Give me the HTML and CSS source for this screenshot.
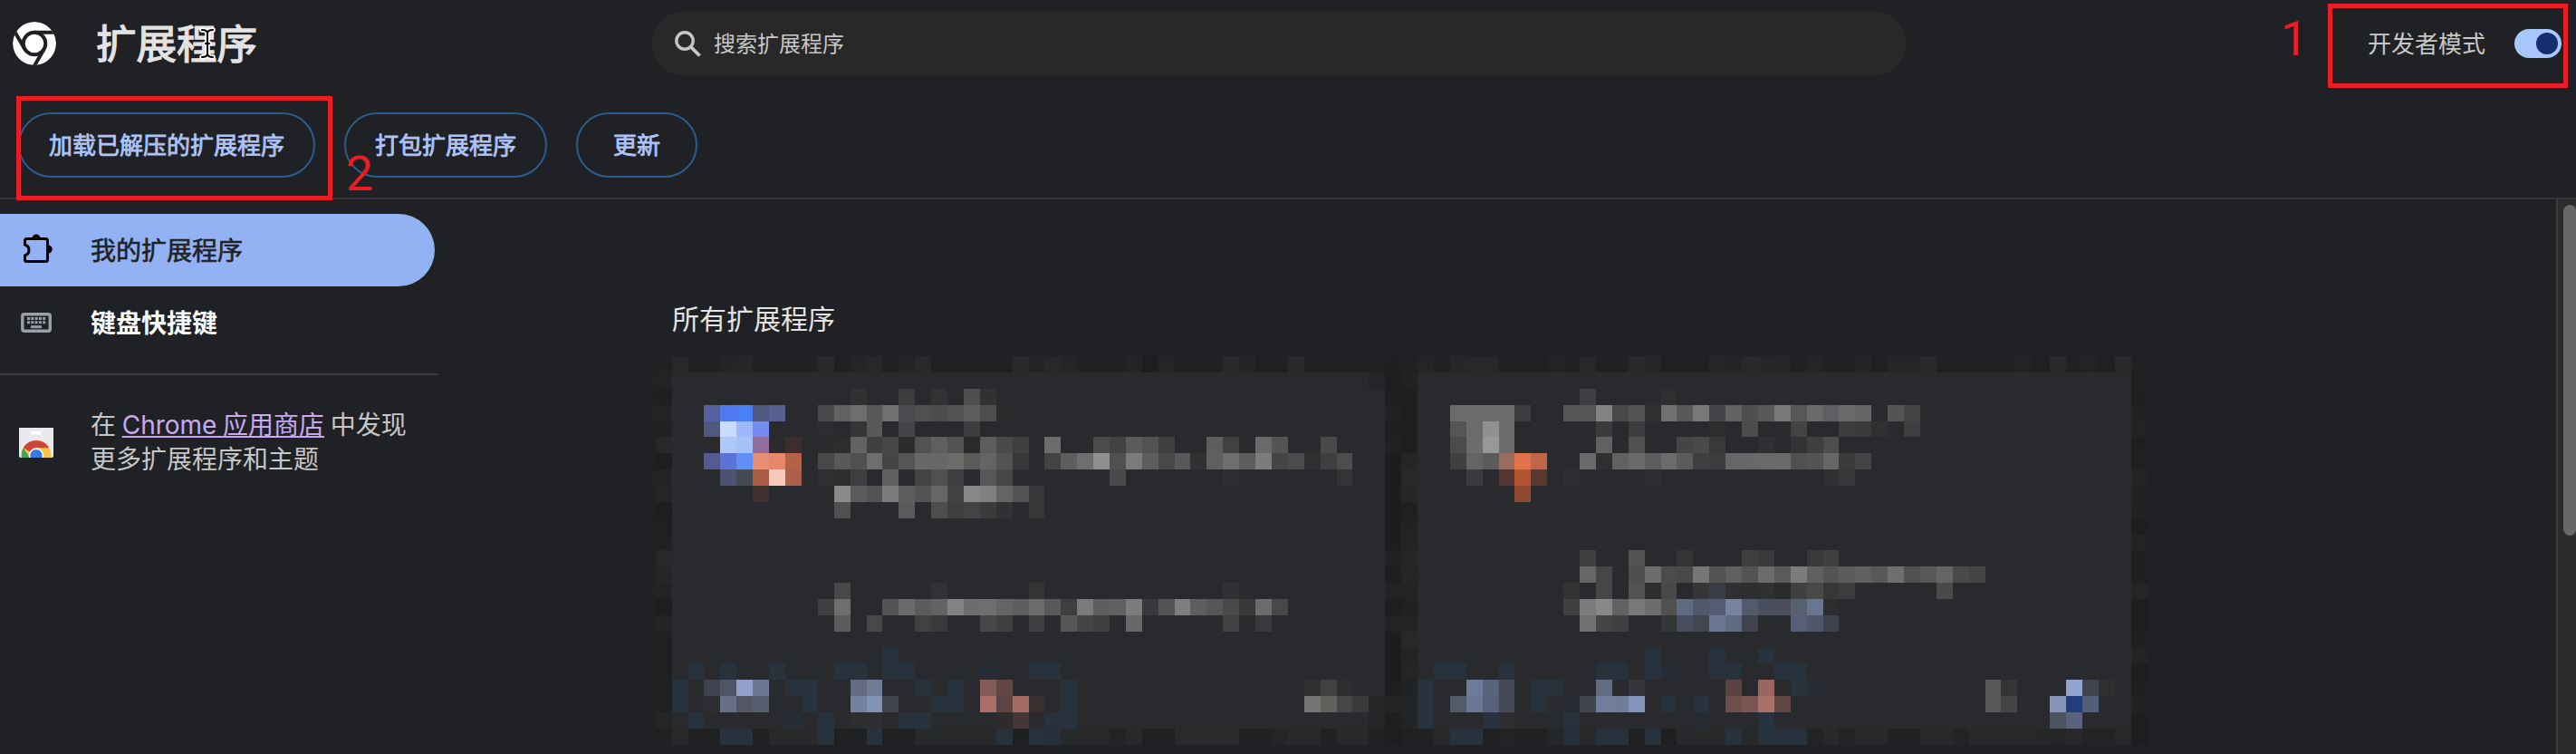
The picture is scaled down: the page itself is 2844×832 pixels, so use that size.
FILE: index.html
```html
<!DOCTYPE html>
<html lang="zh-CN">
<head>
<meta charset="utf-8">
<title>扩展程序</title>
<link rel="stylesheet" href="styles.css">
</head>
<body>
<div class="page">
  <header class="toolbar">
    <div class="brand">
      <svg class="brand-logo" viewBox="0 0 48 48">
        <defs><clipPath id="disc"><circle cx="24" cy="24" r="24"/></clipPath></defs>
        <g clip-path="url(#disc)">
          <circle cx="24" cy="24" r="24" fill="#fff"/>
          <circle cx="24" cy="24" r="12.300" fill="none" stroke="#202124" stroke-width="4"/>
          <path d="M24 11.700H50M13.400 30.200L0.400 7.700M34.600 30.200L21.600 52.700" fill="none" stroke="#202124" stroke-width="4"/>
        </g>
      </svg>
      <h1 class="brand-title">扩展程序</h1>
    </div>
    <div class="search">
      <svg class="search-icon" viewBox="0 0 29 29"><circle cx="11" cy="11" r="9.2" fill="none" stroke="#c7c7c7" stroke-width="3.4"/><path d="M17.5 17.5L27.5 27.5" stroke="#c7c7c7" stroke-width="3.8"/></svg>
      <span class="label">搜索扩展程序</span>
    </div>
    <div class="dev-mode">
      <span class="label">开发者模式</span>
      <span class="toggle"><span class="toggle-knob"></span></span>
    </div>
  </header>
  <div class="actions">
    <button class="action"><span class="label">加载已解压的扩展程序</span></button>
    <button class="action"><span class="label">打包扩展程序</span></button>
    <button class="action action-short"><span class="label">更新</span></button>
  </div>
  <div class="body">
    <nav class="sidebar">
      <a class="nav-item nav-active">
        <svg class="nav-icon" viewBox="0 0 40 40"><path d="M9.500 7.500H30.500Q32.500 7.500 32.500 9.500V30.500Q32.500 32.500 30.500 32.500H9.500Q7.500 32.500 7.500 30.500V26Q12 24.500 12 20T7.500 14V9.500Q7.500 7.500 9.500 7.500Z" fill="none" stroke="#000" stroke-width="3"/><path d="M15.500 7a4.500 4.500 0 0 1 9 0zM33 14.500a4.800 4.500 0 0 1 0 9z" fill="#000"/></svg>
        <span class="label">我的扩展程序</span>
      </a>
      <a class="nav-item nav-bold">
        <svg class="nav-icon" viewBox="0 0 40 40"><rect x="4.800" y="10.800" width="30.500" height="18.500" rx="2" fill="none" stroke="#9aa0a6" stroke-width="3.400"/><path d="M10 15.500H30.500M10 19.800H30.500" stroke="#9aa0a6" stroke-width="3" stroke-dasharray="3 1.300"/><path d="M14 24.700H26" stroke="#9aa0a6" stroke-width="3"/></svg>
        <span class="label">键盘快捷键</span>
      </a>
      <div class="divider"></div>
      <div class="store">
        <svg class="store-icon" viewBox="0 0 38 33">
          <defs><clipPath id="bag"><path d="M0 0H38V31Q38 33 36 33H2Q0 33 0 31Z"/></clipPath></defs>
          <g clip-path="url(#bag)">
            <rect width="38" height="33" fill="#e8eaed"/>
            <rect x="13" y="4" width="12" height="3.500" rx="1.700" fill="#fff"/>
            <circle cx="19" cy="30.500" r="16.500" fill="#f9c440"/>
            <path d="M19 30.500L4.700 22.200A16.500 16.500 0 0 1 33.300 22.200H19z" fill="#d0453a"/>
            <path d="M4.700 22.200A16.500 16.500 0 0 0 3 33H14L11.500 32z" fill="#4c9f58"/>
            <circle cx="19" cy="30.500" r="8.300" fill="#fff"/>
            <circle cx="19" cy="30.500" r="6.600" fill="#3b78e0"/>
          </g>
        </svg>
        <p class="store-text">在 <a class="store-link">Chrome 应用商店</a> 中发现<br>更多扩展程序和主题</p>
      </div>
    </nav>
    <main class="content">
      <h2 class="section-title">所有扩展程序</h2>
      <svg class="cards" id="cards" viewBox="0 0 1648 429" shape-rendering="crispEdges"></svg>
    </main>
    <div class="scrollbar"><div class="thumb"></div></div>
  </div>
  <div class="mark mark-dev"></div>
  <div class="mark mark-load"></div>
  <span class="mark-num num-one">1</span>
  <span class="mark-num num-two">2</span>
  <svg class="cursor" viewBox="0 0 18 36"><g fill="none" stroke-linecap="round"><path d="M3 3Q9 3 9 7Q9 3 15 3M9 7V29M3 33Q9 33 9 29Q9 33 15 33M7 18H11" stroke="#fff" stroke-width="5.500"/><path d="M3 3Q9 3 9 7Q9 3 15 3M9 7V29M3 33Q9 33 9 29Q9 33 15 33M7 18H11" stroke="#000" stroke-width="2"/></g></svg>
</div>
<script src="cards.js"></script>
</body>
</html>
```
FILE: styles.css
```css
body {
  margin: 0;
  background: #202124;
  color: #e3e3e3;
  font-family: "Noto Sans CJK SC", sans-serif;
}
.page {
  position: relative;
  width: 2844px;
  height: 832px;
  overflow: hidden;
  display: flex;
  flex-direction: column;
}
.label { display: block; padding-bottom: 3px; }
.toolbar {
  height: 96px;
  display: grid;
  grid-template-columns: 720px 1384px 1fr;
  align-items: center;
}
.brand { display: flex; align-items: center; gap: 44px; padding-left: 14px; }
.brand-logo { width: 48px; height: 48px; }
.brand-title {
  margin: 0;
  padding-bottom: 4px;
  font-size: 44.5px;
  line-height: 60px;
  font-weight: 400;
  -webkit-text-stroke: 1.3px currentColor;
}
.search {
  height: 72px;
  box-sizing: border-box;
  padding-left: 25px;
  border-radius: 36px;
  background: #282828;
  color: #c7c7c7;
  display: flex;
  align-items: center;
  gap: 14px;
  font-size: 24px;
}
.search-icon { width: 29px; height: 29px; }
.dev-mode {
  display: flex;
  align-items: center;
  justify-content: flex-end;
  gap: 32px;
  padding-right: 16px;
  font-size: 26px;
  color: #c7c7c7;
}
.toggle {
  width: 52px;
  height: 32px;
  box-sizing: border-box;
  padding: 4px;
  border-radius: 16px;
  background: #a8c7fa;
  display: flex;
  justify-content: flex-end;
}
.toggle-knob { width: 24px; height: 24px; border-radius: 50%; background: #142e6e; }
.actions {
  height: 124px;
  box-sizing: border-box;
  padding: 28px 20px 0;
  border-bottom: 2px solid #353639;
  display: flex;
  gap: 32px;
}
.action {
  height: 72px;
  padding: 0 32px;
  border: 2px solid #2d5d8d;
  border-radius: 36px;
  background: none;
  color: #aec4f8;
  font: 26px "Noto Sans CJK SC", sans-serif;
  -webkit-text-stroke: 0.8px currentColor;
}
.action-short { padding: 0 39px; }
.body { flex: 1; display: flex; }
.sidebar { width: 484px; padding-top: 16px; }
.nav-item {
  width: 480px;
  height: 80px;
  box-sizing: border-box;
  padding-left: 20px;
  display: flex;
  align-items: center;
  gap: 40px;
  font-size: 28px;
}
.nav-active {
  background: #93b2f3;
  color: #202124;
  border-radius: 0 40px 40px 0;
  -webkit-text-stroke: 0.6px currentColor;
}
.nav-bold { color: #fff; font-weight: 700; }
.nav-icon { width: 40px; height: 40px; }
.divider { height: 2px; margin-top: 16px; background: #3a3b3e; }
.store { display: flex; align-items: center; gap: 41px; padding: 36px 0 0 21px; }
.store-icon { width: 38px; height: 33px; }
.store-text {
  margin: 0;
  font: 28px/38px Inter, "Noto Sans CJK SC", sans-serif;
  color: #c7c7c7;
  word-spacing: -1.2px;
  white-space: nowrap;
}
.store-link { color: #c9a9ee; text-decoration: underline; }
.content { flex: 1; padding: 108px 0 0 240px; }
.section-title { margin: 0 0 21px 18px; font-size: 30px; line-height: 44px; font-weight: 400; }
.cards { display: block; width: 1648px; height: 429px; }
.scrollbar {
  width: 20px;
  border-left: 2px solid #3a3b3d;
  background: #2c2c2c;
  display: flex;
  justify-content: flex-end;
  padding-top: 6px;
}
.thumb { width: 14px; height: 365px; border-radius: 8px 7px 7px 8px; background: #686868; }
.mark { position: absolute; box-sizing: border-box; border: 5px solid #ea1c24; }
.mark-dev { left: 2570px; top: 4px; width: 265px; height: 93px; }
.mark-load { left: 18px; top: 106px; width: 349px; height: 115px; }
.mark-num { position: absolute; font: 54px/64px Roboto, sans-serif; color: #ea1c24; }
.num-one { left: 2518px; top: 11px; }
.num-two { left: 382px; top: 160px; }
.cursor { position: absolute; left: 220px; top: 30px; width: 18px; height: 36px; }
```
FILE: cards.js
```js
// Pixelated extension cards. Each row lists runs as "column:cells";
// a cell is a two-digit grey, a six-digit colour, N (navy tint) or "-" (card surface).
const rows = {
  0: '1:27 1f 1f 23 25 1f 1f 1f 21 28 1f 24 27 20 23 28 1f 21 1f 1f 1f 28 22 27 24 20 20 20 23 1d 24 20 20 20 28 23 1f 1f 28 1f 1f 1f 21 1f 1e 20 24 1f 25 27 27 1f 1f 1f 22 20 27 20 20 28 25 1f 1f 1f 25 23 28 26 25 20 24 1f 1f 23 1f 24 24 28 1f 1f 21 20 21 22 1f 28 20 22 1f 28',
  2: '12:30 15:3b 17:31 19:4e 30 57:3f3e42 62:2e',
  3: '3:5560a0 5079f2 4a80f5 50587f 586091 10:4b494d 62 6e 58 70 4d4b50 50 4c 52 5e 4e 2b 49:6b 6b 6b 6b 3c 56:55 55 83 48 52 2f 70 58 78 454449 62 4f 58 78 57 6a 605e63 6a 65 76:54 44',
  4: '3:50587f c9ddff 9cbafb 748cf0 10:2c 12:35 59 15:454449 19:3c 49:55 6c 90 6c 58:3a 60:3c 65:2c 67:4c 70:43 73:3c 39 2f 77:3d',
  5: '4:adc8fb a4c2f8 916c9f 8:3c2e2e 10:2b 2c 63 40 46 2a 52 5f 52 - 5c 4a 40 24:6c 27:4b 42 5b 52 3e 34:5e 41 37:69 54 41:4a 49:4b 6c 98 6c 58:61 60:50 63:45 4a 38 68:2f 70:32 3e 4d',
  6: '3:545b92 5b72d6 5f90fa e88e72 e68869 b36248 10:48 59 50 6e 44 55 68 68 6b6c68 5a 64 53 37 24:43 5e 6e 90 50 7b 5d 48 58 30 5f 6e 5c 7c 45 4b 2e 3e 4d 49:40 64 5b 9a6c5e e1724a c06648 57:6a 2e 61 6a 5c 6b 5b 3e 3b 66 68 69 6a 50 54 66 3a 44',
  7: '4:4d5270 474a54 a85c44 f5c8b8 ab5f48 10:2e 2d 3e - 60 - 44 50 3e - 57 47 28:4a 35:2d 42:33 50:3b3a3f 52:55362f b35433 5b382f 56:2d 61:2d 72:2f 36',
  8: '6:3e302f 11:8a 5b 52 7c 5d 54 66 42 88 80 64 52 36 53:8f4932',
  9: '11:50 15:5a 17:4d 3d 43 3a 30 23:36',
  12: '57:3e 60:52 63:33 67:3e 38 71:38 40',
  13: '57:66 46 60:4e 6c 4c 49 76 52 60 54 6c 5a 7c 60 54 5b 60 58 6e 50 58 64 4a 44',
  14: '11:48 17:31 23:33 35:30 56:32 58:46 60:53 2d 49 64:35 3a3d48 2f 2d 2f 70:40 49 36 3b 79:4a',
  15: '10:3f 6e 14:53 6a 5b 63 82 6d 6e 64 5e 6b 59 3d 7a 5e 60 7c 37 53 7e 5e 56 49 37 6b 48 56:40 7c 88 62 78 6c 50 5f6a83 51586a 555b70 76849f 525a6c 4a4f60 4a4e5f 566070 6a7690 2c',
  16: '11:5b 13:48 16:41 39 20:47 40 23:3f 25:56 45 40 29:67 35:41 37:39 57:70 45 3f 62:34 484d5e 42464f 6b7893 606b82 40434d 70:555f75 4f5668 3e424c',
  18: '14:N 61:N 65:N 68:N',
  19: '2:N 4:N 7:N 11:N N 14:N N 20:272d34 23:N N 48:N N 52:N 58:N N 61:N 272d34 65:N N 69:N N',
  20: '1:N 3:40424d 4e5567 8fa1c9 6c7791 8:N N 12:626b83 6f7b97 16:N 18:N 20:855b58 634643 25:N 40:30 42 2d 47:N 50:6d7a99 5a6379 474a55 54:N N 58:616c82 60:35363d 66:5a4442 68:996462 70:N 282d34 82:57 33 87:92a5d0 3f434f 2e',
  21: '1:N 3:2d 666f87 525763 565e70 9:N 12:74829f 8393b5 40434d 17:N N 20:a96f68 5b4443 a46b65 372f30 25:N 40:74 60615c 46 38 25 47:N 49:525a6b 6b7893 586179 454955 54:N 56:272c33 42444e 717f9f 707c98 8594bb 62:N 64:N 66:6d4e4b 7b5552 aa706a 5e4642 82:57 45 86:8795b8 213d7d 525e7a',
  22: '2:N 8:272d34 10:N 12:2d 2d 15:N N 21:2f2b2d 443537 24:N N 44:24 47:N 51:N 2d 56:N 64:272c33 68:N 86:4b5260 5a637b',
  23: '1:28 1f 1f N N 1f 28 28 28 N 1f 1f N 1f 1f 28 28 28 28 28 N 1e N 27303a 28 28 28 22 28 1f 1f 29 29 29 29 20 20 24 28 28 21 28 28 20 1e 20 20 28 N N 1f 22 20 20 25 27303a 28 N N 1f N 1e 28 28 28 N 27 N N N 22 28 22 28 28 20 20 28 28 22 28 28 28 28 26 24 28 22 22 28'
};
// Card margins, top to bottom.
const sides = {
  0: '20 22 1e 22 20 27 1d 22 25 1d 1f 20 27 25 22 1d 23 1f 1f 1f 1f 1f 24 1f',
  45: '1e 1e 1e 21 1e 20 1c 1c 1c 1c 1c 1c 21 1d 22 1d 22 1c 1c 1c 1d 23 1e 1d',
  46: '20 21 1e 1e 1d 1d 24 27 26 1f 21 22 25 24 22 20 22 27 22 24 21 23 23 20',
  91: '20 1f 1e 21 22 1e 1f 23 21 20 1d 22 1e 1e 24 1d 1d 1e 23 1d 1e 21 1d 1d'
};
const svg = document.getElementById('cards');
const colX = c => Math.round(17.9 * c - 0.2);
const rowY = r => Math.round(17.86 * r + 0.07);

function colour(cell) {
  if (cell === 'N') return '#27323d';
  if (cell.length === 6) return '#' + cell;
  const g = parseInt(cell, 16);
  return g < 64 ? `rgb(${g},${g + 1},${g + 3})` : `rgb(${g},${g},${g + 1})`;
}
function paint(c, r, w, h, fill) {
  const rect = document.createElementNS('http://www.w3.org/2000/svg', 'rect');
  rect.setAttribute('x', colX(c));
  rect.setAttribute('y', rowY(r));
  rect.setAttribute('width', colX(c + w) - colX(c));
  rect.setAttribute('height', rowY(r + h) - rowY(r));
  rect.setAttribute('fill', fill);
  svg.appendChild(rect);
}
paint(1, 1, 44, 22, '#292a2d');
paint(47, 1, 44, 22, '#292a2d');
paint(44, 1, 1, 1, '#242528');
for (const [r, line] of Object.entries(rows)) {
  let c = 0;
  for (let cell of line.split(' ')) {
    if (cell.includes(':')) {
      const parts = cell.split(':');
      c = Number(parts[0]);
      cell = parts[1];
    }
    if (cell !== '-') paint(c, Number(r), 1, 1, colour(cell));
    c++;
  }
}
for (const [c, line] of Object.entries(sides)) {
  line.split(' ').forEach((cell, r) => paint(Number(c), r, 1, 1, colour(cell)));
}
```
